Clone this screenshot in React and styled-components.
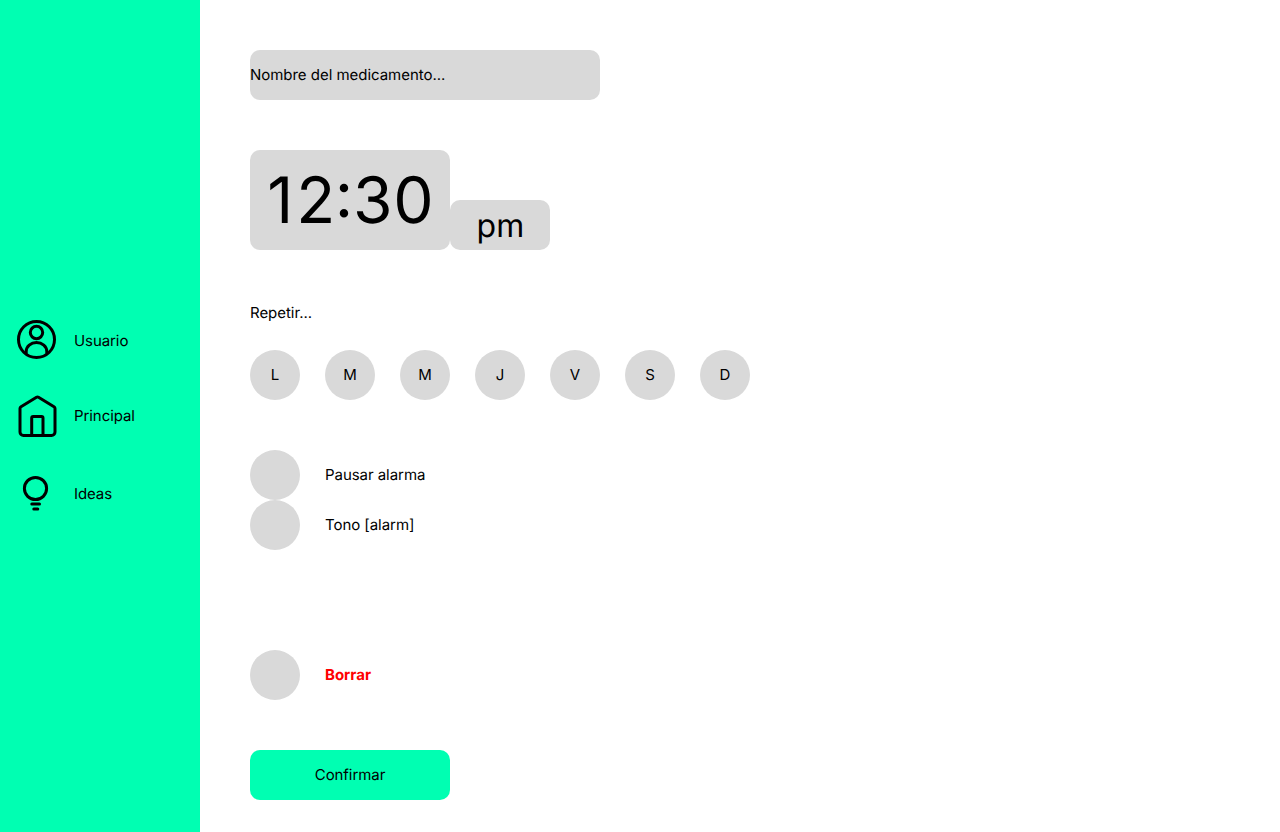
import React from "react";
import styled, { createGlobalStyle } from "styled-components";

const Global = createGlobalStyle`
  * { box-sizing: border-box; }
  body { margin: 0; background: #fff; color: #000; font-family: Inter, sans-serif; font-size: 15px; line-height: 18px; letter-spacing: -0.03px; text-rendering: geometricPrecision; }
  button { font: inherit; color: inherit; border: 0; padding: 0; cursor: pointer; text-rendering: inherit; letter-spacing: inherit; }
`;
const Page = styled.div`display: flex; height: 832px; overflow: hidden;`;
const Sidebar = styled.nav`
  width: 200px; background: #00ffb2; padding: 316px 0 0 16px;
  display: flex; flex-direction: column; letter-spacing: -0.08px;
`;
const NavItem = styled.a`
  display: flex; align-items: center; gap: 16px; height: 50px;
  margin-bottom: ${(p) => p.$after || 0}px;
  svg { width: 42px; height: 50px; flex: none; }
`;
const Main = styled.main`flex: 1; padding: 50px 50px 32px; display: flex; flex-direction: column; align-items: flex-start;`;
const NameField = styled.div`
  width: 350px; height: 50px; border-radius: 10px; background: #d9d9d9;
  display: flex; align-items: center; flex: none;
`;
const TimeRow = styled.div`display: flex; align-items: flex-end; margin-top: 50px;`;
const Box = styled.div`
  background: #d9d9d9; border-radius: 10px; display: flex; align-items: center; justify-content: center;
  line-height: 1.2; letter-spacing: 0;
`;
const Clock = styled(Box)`width: 200px; height: 100px; font-size: 64px; padding: 2px 0 0 1px;`;
const Meridiem = styled(Box)`width: 100px; height: 50px; font-size: 32px; padding: 2px 0 0 1px; letter-spacing: 0.2px;`;
const Digit = styled.span`letter-spacing: ${(p) => p.$gap || 0}px;`;
const Colon = styled.span`position: relative; top: -5.7px;`;
const RepeatLabel = styled.div`margin-top: 54px; height: 18px;`;
const Days = styled.div`display: flex; gap: 25px; margin: 28px 0 50px;`;
const Circle = styled.button`width: 50px; height: 50px; border-radius: 50%; background: #d9d9d9; flex: none;`;
const Option = styled.div`
  display: flex; align-items: center; gap: 25px; margin-top: ${(p) => p.$top || 0}px;
  color: ${(p) => (p.$danger ? "#ff0000" : "#000")}; font-weight: ${(p) => (p.$danger ? 700 : 400)};
  letter-spacing: ${(p) => (p.$danger ? 0 : -0.05)}px;
`;
const Confirm = styled.button`width: 200px; height: 50px; border-radius: 10px; background: #00ffb2; margin-top: 50px; flex: none; letter-spacing: -0.07px;`;

const stroke = { fill: "none", stroke: "#000", strokeWidth: 3, strokeLinecap: "round", strokeLinejoin: "round" };

export default function App() {
  return (
    <Page>
      <Global />
      <Sidebar>
        <NavItem $after={25}>
          <svg viewBox="0 0 42 50" {...stroke}>
            <circle cx="20.5" cy="23.5" r="18" />
            <circle cx="20.5" cy="16.5" r="6.2" />
            <path d="M10.2 37v-1.500a10.300 9 0 0 1 20.600 0v1.500" />
          </svg>
          Usuario
        </NavItem>
        <NavItem $after={28}>
          <svg viewBox="0 0 42 50" {...stroke}>
            <path d="M4 17.500q0-1.200 1-1.800L20.500 6.200q1-.6 2 0L38 15.700q1 .6 1 1.800V41a3.500 3.500 0 0 1-3.500 3.500h-28A3.500 3.500 0 0 1 4 41Z" />
            <path d="M15.700 44.500V27a1.500 1.500 0 0 1 1.500-1.500H25.500A1.500 1.500 0 0 1 27 27v17.500" />
          </svg>
          Principal
        </NavItem>
        <NavItem>
          <svg viewBox="0 0 42 50" {...stroke}>
            <circle cx="19.5" cy="19.5" r="11.1" />
            <path d="M15.800 35h7.700M17.800 40h4" />
          </svg>
          Ideas
        </NavItem>
      </Sidebar>
      <Main>
        <NameField>Nombre del medicamento...</NameField>
        <TimeRow>
          <Clock>
            <div><Digit $gap={2.9}>1</Digit><Digit $gap={-0.6}>2</Digit><Colon>:</Colon><Digit $gap={0.7}>3</Digit><Digit>0</Digit></div>
          </Clock>
          <Meridiem>pm</Meridiem>
        </TimeRow>
        <RepeatLabel>Repetir...</RepeatLabel>
        <Days>{["L", "M", "M", "J", "V", "S", "D"].map((d, i) => <Circle key={i}>{d}</Circle>)}</Days>
        <Option><Circle />Pausar alarma</Option>
        <Option><Circle />Tono [alarm]</Option>
        <Option $top={100} $danger><Circle />Borrar</Option>
        <Confirm>Confirmar</Confirm>
      </Main>
    </Page>
  );
}
